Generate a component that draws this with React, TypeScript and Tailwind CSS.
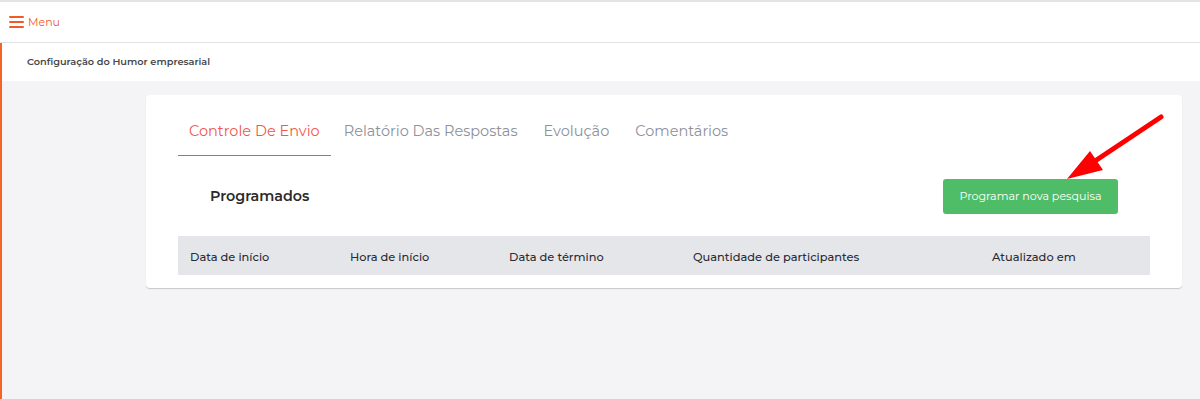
import React from "react";

export default function App() {
  const font = { fontFamily: "Montserrat, Inter, 'Noto Sans', sans-serif" };
  const tabs = ["Relatório Das Respostas", "Evolução", "Comentários"];
  const cols = [
    { label: "Data de início", w: "w-[160px]" },
    { label: "Hora de início", w: "w-[159px]" },
    { label: "Data de término", w: "w-[184px]" },
    { label: "Quantidade de participantes", w: "w-[299px]" },
    { label: "Atualizado em", w: "flex-1" },
  ];
  return (
    <div className="relative w-[1200px] h-[399px] overflow-hidden bg-[#f4f3f6]" style={font}>
      <div className="h-[43px] bg-white border-t-2 border-[#e4e4e6] border-b border-b-[#e2e2e4] flex items-center pl-[9px] gap-[4px]">
        <svg width="15" height="12" viewBox="0 0 15 12">
          <rect x="0" y="0" width="15" height="2" rx="1" fill="#f05a2a" />
          <rect x="0" y="5" width="15" height="2" rx="1" fill="#f05a2a" />
          <rect x="0" y="10" width="15" height="2" rx="1" fill="#f05a2a" />
        </svg>
        <span className="text-[11px] text-[#f05a2a] leading-none">Menu</span>
      </div>
      <div className="flex h-[356px]">
        <div className="w-[2px] bg-[#f26522] shrink-0" />
        <div className="flex-1 flex flex-col">
          <div className="h-[38px] bg-white flex items-center pl-[25px]">
            <span className="text-[9.75px] font-semibold text-[#4a4a4a]">Configuração do Humor empresarial</span>
          </div>
          <div className="pl-[144px] pr-[18px] pt-[14px]">
            <div className="bg-white rounded-[4px] shadow-[0_1px_1px_rgba(0,0,0,0.18)] h-[193px] px-[32px] pt-[20px]">
              <div className="flex items-end h-[41px]">
                <div className="h-full px-[11px] pb-[7px] border-b border-[#f05a2a] flex items-center">
                  <span className="text-[14.5px] text-[#f0584a]">Controle De Envio</span>
                </div>
                {tabs.map((t) => (
                  <div key={t} className="h-full px-[13px] pb-[7px] flex items-center">
                    <span className="text-[14.5px] text-[#8c919b]">{t}</span>
                  </div>
                ))}
              </div>
              <div className="flex items-center justify-between mt-[23px] pl-[32px] pr-[32px]">
                <span className="text-[14.3px] font-semibold text-[#2a2a2a]">Programados</span>
                <button className="h-[35px] w-[175px] rounded-[3px] bg-[#4fbd68] text-white text-[11.1px]">
                  Programar nova pesquisa
                </button>
              </div>
              <div className="mt-[22px] h-[39px] bg-[#e5e6ea] flex items-center pl-[12px]">
                {cols.map((c) => (
                  <div key={c.label} className={c.w}>
                    <span className="text-[11.4px] font-medium text-[#2b2b33]">{c.label}</span>
                  </div>
                ))}
              </div>
            </div>
          </div>
        </div>
      </div>
      <svg className="absolute left-0 top-0 pointer-events-none" width="1200" height="399">
        <line x1="1161" y1="117" x2="1092" y2="163" stroke="#ff0000" strokeWidth="5" strokeLinecap="round" />
        <polygon points="1067,179 1090,151 1103,170" fill="#ff0000" />
      </svg>
    </div>
  );
}
